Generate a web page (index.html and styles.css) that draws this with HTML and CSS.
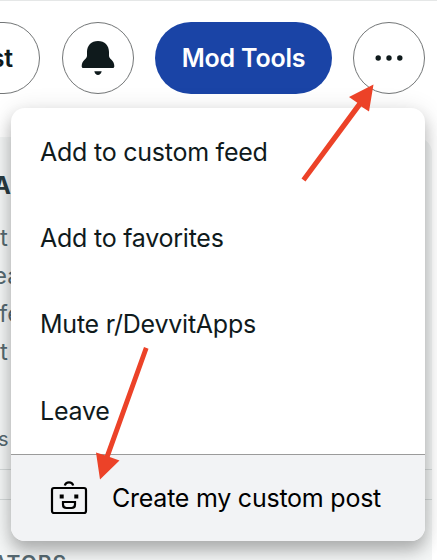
FILE: index.html
```html
<!DOCTYPE html>
<html lang="en">
<head>
<meta charset="utf-8">
<title>Community menu</title>
<link rel="stylesheet" href="styles.css">
</head>
<body>
<header class="actions">
  <button class="pill create">st</button>
  <button class="pill round" aria-label="Notifications">
    <svg width="36" height="38" viewBox="0 0 36 38" fill="#0f1a1c"><path d="M18 2C11.3 2 7 6.600 7 13v3.300C7 18 6.400 19 4.800 20.500 2.700 22.500 1.700 24.500 1.700 27v.5Q1.700 29 3.300 29H32.700Q34.300 29 34.300 27.500V27C34.300 24.500 33.300 22.500 31.200 20.500 29.600 19 29 18 29 16.300V13C29 6.600 24.700 2 18 2ZM14.300 32.300h7.400C21 34.900 19.800 36 18 36s-3-1.100-3.700-3.700Z"/></svg>
  </button>
  <button class="pill mod">Mod Tools</button>
  <button class="pill round" aria-label="More">
    <svg width="30" height="8" viewBox="0 0 30 8" fill="#0f1a1c"><circle cx="4.200" cy="4" r="2.700"/><circle cx="15" cy="4" r="2.700"/><circle cx="25.800" cy="4" r="2.700"/></svg>
  </button>
</header>
<aside class="sidebar">
  <h2 class="title">A</h2>
  <p class="about"><span>t</span><span class="cut">ea</span><span class="nudge">fe</span><span>t</span></p>
  <p class="stat">s</p>
  <hr><hr class="second">
  <h3 class="section">ATORS</h3>
</aside>
<nav class="menu">
  <a class="item feed">Add to custom feed</a>
  <a class="item favorites">Add to favorites</a>
  <a class="item mute">Mute r/DevvitApps</a>
  <a class="item leave">Leave</a>
  <a class="item custom">
    <svg width="38" height="36" viewBox="0 0 38 36" fill="none" stroke="#000" stroke-width="2.200"><rect x="2" y="8" width="34" height="25" rx="2"/><path d="M14.800 5.500C15.300 3.600 16.700 2.300 19 2.300s3.700 1.300 4.200 3.200M13 22h12v2.500q0 3.500-3.500 3.500h-5Q13 28 13 24.500Z"/><path d="M9.700 14.500h4v4h-4zM24.300 14.500h4v4h-4z" fill="#000" stroke="none"/></svg>
    <span>Create my custom post</span>
  </a>
</nav>
<svg class="arrows" width="437" height="560" viewBox="0 0 437 560" fill="#ec4228">
  <path d="M373.500 84.500L369 111.500 361.300 106.500 305.500 181.500 301.500 178.500 357.300 102.800 349 97Z"/>
  <path d="M144 347L148.500 348.700 109.700 457 119.500 460.500 100 479.500 96 452.500 105 455.300Z"/>
</svg>
</body>
</html>
```
FILE: styles.css
```css
* { box-sizing: border-box; }
body {
  margin: 0;
  height: 560px;
  overflow: hidden;
  position: relative;
  background: #fff;
  color: #0f1a1c;
  font-family: Inter, "Liberation Sans", sans-serif;
}
.actions {
  height: 137px;
  display: flex;
  align-items: flex-start;
  padding-top: 21px;
  border-top: 1px solid #e5e7e7;
}
.pill {
  flex: none;
  display: flex;
  align-items: center;
  justify-content: center;
  height: 72px;
  padding: 0;
  border: 1px solid #737677;
  border-radius: 36px;
  background: #fff;
  color: #0f1a1c;
  font: 600 25px/1 Inter, sans-serif;
  letter-spacing: -.2px;
}
.create { width: 120px; margin-left: -80px; justify-content: flex-end; padding-right: 26px; }
.round { width: 72px; margin-left: 22px; }
.mod { width: 177px; margin-left: 21px; border: 0; background: #1a44a6; color: #fff; }
.mod + .round { margin-left: 21px; }
.sidebar {
  width: 432px;
  height: 423px;
  overflow: hidden;
  border-radius: 0 16px 0 0;
  background: #f4f6f6;
  color: #576a72;
  padding-top: 34px;
}
.title { margin: 0 0 0 -7px; font-size: 24px; line-height: 30px; color: #2a3c42; }
.about { margin: 18px 0 0; font-size: 24px; line-height: 38px; }
.about span { display: block; }
.about .cut { margin-left: -7px; }
.about .nudge { margin-left: -1px; }
.stat { margin: 56px 0 0 -2px; font-size: 20px; line-height: 25px; }
hr { margin: 17px 0 0; border: 0; border-top: 1px solid #d5dada; }
hr.second { margin-top: 29px; }
.section { margin: 52px 0 0 -8px; font-size: 21px; line-height: 24px; font-weight: 600; letter-spacing: 1px; }
.menu {
  position: absolute;
  left: 11px;
  top: 108px;
  width: 414px;
  height: 433px;
  display: flex;
  flex-direction: column;
  border-radius: 14px;
  background: #fff;
  box-shadow: 0 10px 16px rgba(0,0,0,.24), 0 2px 24px rgba(0,0,0,.12);
}
.item { height: 86.500px; padding-left: 29px; font-size: 25px; line-height: 87px; letter-spacing: -.24px; white-space: nowrap; }
.feed { line-height: 89px; }
.custom {
  height: 87px;
  display: flex;
  align-items: center;
  padding-left: 39px;
  border-top: 1px solid #9b9b9b;
  border-radius: 0 0 14px 14px;
  background: #f2f3f5;
  color: #000;
}
.custom span { margin-left: 24px; }
.arrows { position: absolute; left: 0; top: 0; }
```
